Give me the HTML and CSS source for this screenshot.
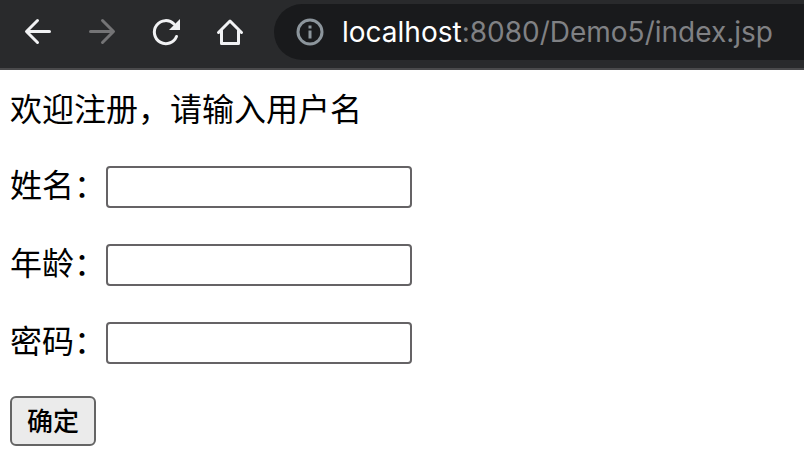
FILE: index.html
```
<!DOCTYPE html>
<html lang="zh-CN">
<head>
<meta charset="UTF-8">
<meta name="viewport" content="width=device-width, initial-scale=1.0">
<title>index.jsp</title>
<link rel="stylesheet" href="styles.css">
</head>
<body>
<header class="toolbar">
    <nav class="nav">
        <button class="nav-button" type="button" aria-label="Back">
            <svg viewBox="0 0 32 32"><path d="M27.500 15.500H5M15.500 4.500L4.500 15.500L15.500 26.500"/></svg>
        </button>
        <button class="nav-button" type="button" aria-label="Forward" disabled>
            <svg viewBox="0 0 32 32"><path d="M4.500 15.500H27M16.500 4.500L27.500 15.500L16.500 26.500"/></svg>
        </button>
        <button class="nav-button" type="button" aria-label="Reload">
            <svg viewBox="0 0 32 32"><path d="M26.500 20.500A11.500 11.500 0 1 1 24 8"/><path class="fill" d="M30 3V14H19Z"/></svg>
        </button>
        <button class="nav-button" type="button" aria-label="Home">
            <svg viewBox="0 0 32 32"><path d="M4.500 16.500L16 5L27.500 16.500M7.500 14.500V27.500H24.500V14.500"/></svg>
        </button>
    </nav>
    <div class="address">
        <svg class="info" viewBox="0 0 28 28"><circle cx="14" cy="14" r="12"/><path d="M14 12.500V20.500M14 7.500V10.500"/></svg>
        <span class="url"><span class="host">localhost</span>:8080/Demo5/index.jsp</span>
    </div>
</header>
<main class="page">
    <p class="welcome">欢迎注册，请输入用户名</p>
    <form class="form">
        <div class="row">
            <label for="name">姓名：</label>
            <input class="field" type="text" id="name" name="name">
        </div>
        <div class="row">
            <label for="age">年龄：</label>
            <input class="field" type="text" id="age" name="age">
        </div>
        <div class="row">
            <label for="password">密码：</label>
            <input class="field" type="password" id="password" name="password">
        </div>
        <button class="submit" type="submit">确定</button>
    </form>
</main>
</body>
</html>
```
FILE: styles.css
```
body {
    margin: 0;
    background-color: #fff;
    color: #000;
    font-family: "Noto Sans CJK SC", sans-serif;
    font-size: 32px;
    line-height: 42px;
}
.toolbar {
    display: flex;
    align-items: center;
    gap: 28px;
    padding: 4px 0 8px 22px;
    background-color: #292a2c;
    border-bottom: 2px solid #4a4a4c;
}
.nav {
    display: flex;
    gap: 32px;
}
.nav-button {
    width: 32px;
    height: 32px;
    padding: 0;
    border: none;
    background: none;
    color: #f1f2f4;
}
.nav-button:disabled {
    color: #747476;
}
.nav-button svg {
    display: block;
    fill: none;
    stroke: currentColor;
    stroke-width: 3;
    stroke-linecap: round;
    stroke-linejoin: round;
}
.nav-button .fill {
    fill: currentColor;
    stroke: none;
}
.address {
    flex: 1;
    display: flex;
    align-items: center;
    gap: 18px;
    height: 56px;
    padding-left: 22px;
    border-radius: 28px 0 0 28px;
    background-color: #191a1c;
}
.info {
    width: 28px;
    height: 28px;
    fill: none;
    stroke: #8c959c;
    stroke-width: 3;
}
.url {
    color: #808184;
    font-family: Inter, sans-serif;
    font-size: 28px;
    line-height: 32px;
    white-space: nowrap;
}
.host {
    color: #fff;
}
.page {
    padding: 16px 10px;
}
.welcome {
    margin: 0 0 38px;
}
.form {
    display: flex;
    flex-direction: column;
    align-items: flex-start;
}
.row {
    display: flex;
    align-items: flex-start;
    margin-bottom: 36px;
    line-height: 34px;
}
.row:nth-last-child(2) {
    margin-bottom: 32px;
}
.field {
    box-sizing: border-box;
    width: 306px;
    height: 42px;
    padding: 2px 4px;
    border: 2px solid #656365;
    border-radius: 4px;
    background-color: #fff;
    font-size: 26px;
}
.submit {
    height: 50px;
    padding: 0 15px 3px;
    border: 2px solid #656565;
    border-radius: 6px;
    background-color: #ebebeb;
    color: #000;
    font-family: inherit;
    font-size: 26px;
    font-weight: 500;
    line-height: 32px;
}
```
